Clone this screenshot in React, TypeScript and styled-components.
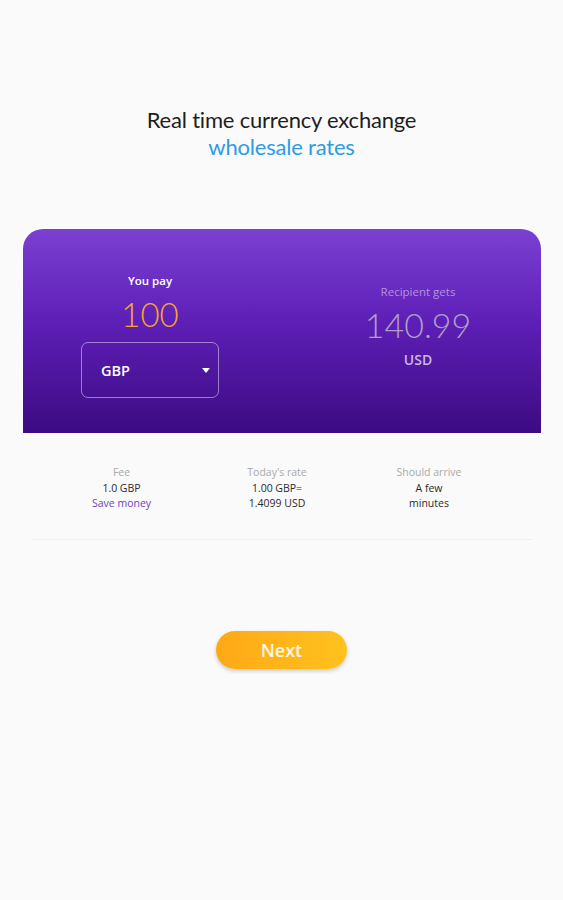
import React from 'react'
import styled, { createGlobalStyle } from 'styled-components'

const GlobalStyle = createGlobalStyle`
  html, body {
    margin: 0;
    padding: 0;
    background: #fafafa;
  }
  body {
    font-family: 'Open Sans', 'Liberation Sans', sans-serif;
  }
`

const Page = styled.div`
  width: 563px;
  min-height: 900px;
  display: flex;
  flex-direction: column;
  align-items: center;
`

const Heading = styled.header`
  margin-top: 106px;
  display: flex;
  flex-direction: column;
  align-items: center;
  font-family: 'Lato', 'Liberation Sans', sans-serif;
  font-size: 22px;
  line-height: 27px;
  letter-spacing: -0.2px;
`

const HeadLine = styled.span<{ $accent?: boolean }>`
  color: ${p => (p.$accent ? '#2b9de6' : '#1e1e1e')};
`

const Card = styled.section`
  margin-top: 69px;
  width: 518px;
  height: 204px;
  border-radius: 20px 20px 0 0;
  background: linear-gradient(180deg, #7c40d2 0%, #5e1fb7 45%, #3c0b82 100%);
  display: grid;
  grid-template-columns: 1fr 1fr;
  box-sizing: border-box;
`

const PayCol = styled.div`
  display: flex;
  flex-direction: column;
  align-items: center;
  padding-top: 44px;
  padding-right: 4px;
`

const GetCol = styled.div`
  display: flex;
  flex-direction: column;
  align-items: center;
  padding-top: 55px;
  padding-left: 14px;
`

const SmallLabel = styled.div<{ $muted?: boolean }>`
  font-size: 11.5px;
  font-weight: ${p => (p.$muted ? 400 : 600)};
  color: ${p => (p.$muted ? '#b394dc' : '#ffffff')};
  line-height: 16px;
`

const Amount = styled.div<{ $muted?: boolean }>`
  font-family: 'Lato', 'Liberation Sans', sans-serif;
  font-weight: 300;
  font-size: ${p => (p.$muted ? '34px' : '33px')};
  line-height: 42px;
  margin-top: 4px;
  color: ${p => (p.$muted ? '#ada0c4' : '#f7a52a')};
`

const Currency = styled.div`
  font-size: 14px;
  font-weight: 600;
  color: #c9b8e0;
  margin-top: 4px;
`

const Select = styled.div`
  margin-top: 7px;
  width: 138px;
  height: 56px;
  box-sizing: border-box;
  border: 1px solid rgba(255, 255, 255, 0.45);
  border-radius: 7px;
  display: flex;
  align-items: center;
  justify-content: space-between;
  padding: 0 8px 0 19px;
  color: #ffffff;
  font-size: 14.5px;
  font-weight: 600;
`

const Caret = styled.span`
  width: 0;
  height: 0;
  border-left: 4.5px solid transparent;
  border-right: 4.5px solid transparent;
  border-top: 5px solid #ffffff;
`

const Stats = styled.div`
  margin-top: 32px;
  width: 500px;
  display: grid;
  grid-template-columns: 180px 131px 173px 1fr;
  padding-bottom: 27px;
  border-bottom: 1px solid #efefef;
`

const Stat = styled.div`
  display: flex;
  flex-direction: column;
  align-items: center;
  font-size: 10.5px;
  line-height: 15.5px;
  color: #2a2a2a;
  text-align: center;
`

const StatLabel = styled.div`
  color: #a9a9a9;
`

const StatLink = styled.div`
  color: #6b45c4;
`

const NextButton = styled.button`
  margin-top: 91px;
  width: 131px;
  height: 38px;
  border: none;
  border-radius: 19px;
  background: linear-gradient(90deg, #ffa816 0%, #ffc21e 100%);
  box-shadow: 0 2px 4px rgba(0, 0, 0, 0.2);
  color: #fff7e6;
  font-family: 'Open Sans', 'Liberation Sans', sans-serif;
  font-weight: 600;
  font-size: 18px;
  line-height: 36px;
  padding: 0;
  cursor: pointer;
`

export default function App() {
  return (
    <Page>
      <GlobalStyle />
      <Heading>
        <HeadLine>Real time currency exchange</HeadLine>
        <HeadLine $accent>wholesale rates</HeadLine>
      </Heading>

      <Card>
        <PayCol>
          <SmallLabel>You pay</SmallLabel>
          <Amount>100</Amount>
          <Select>
            <span>GBP</span>
            <Caret />
          </Select>
        </PayCol>
        <GetCol>
          <SmallLabel $muted>Recipient gets</SmallLabel>
          <Amount $muted>140.99</Amount>
          <Currency>USD</Currency>
        </GetCol>
      </Card>

      <Stats>
        <Stat>
          <StatLabel>Fee</StatLabel>
          <div>1.0 GBP</div>
          <StatLink>Save money</StatLink>
        </Stat>
        <Stat>
          <StatLabel>Today's rate</StatLabel>
          <div>1.00 GBP=</div>
          <div>1.4099 USD</div>
        </Stat>
        <Stat>
          <StatLabel>Should arrive</StatLabel>
          <div>A few</div>
          <div>minutes</div>
        </Stat>
      </Stats>

      <NextButton>Next</NextButton>
    </Page>
  )
}
